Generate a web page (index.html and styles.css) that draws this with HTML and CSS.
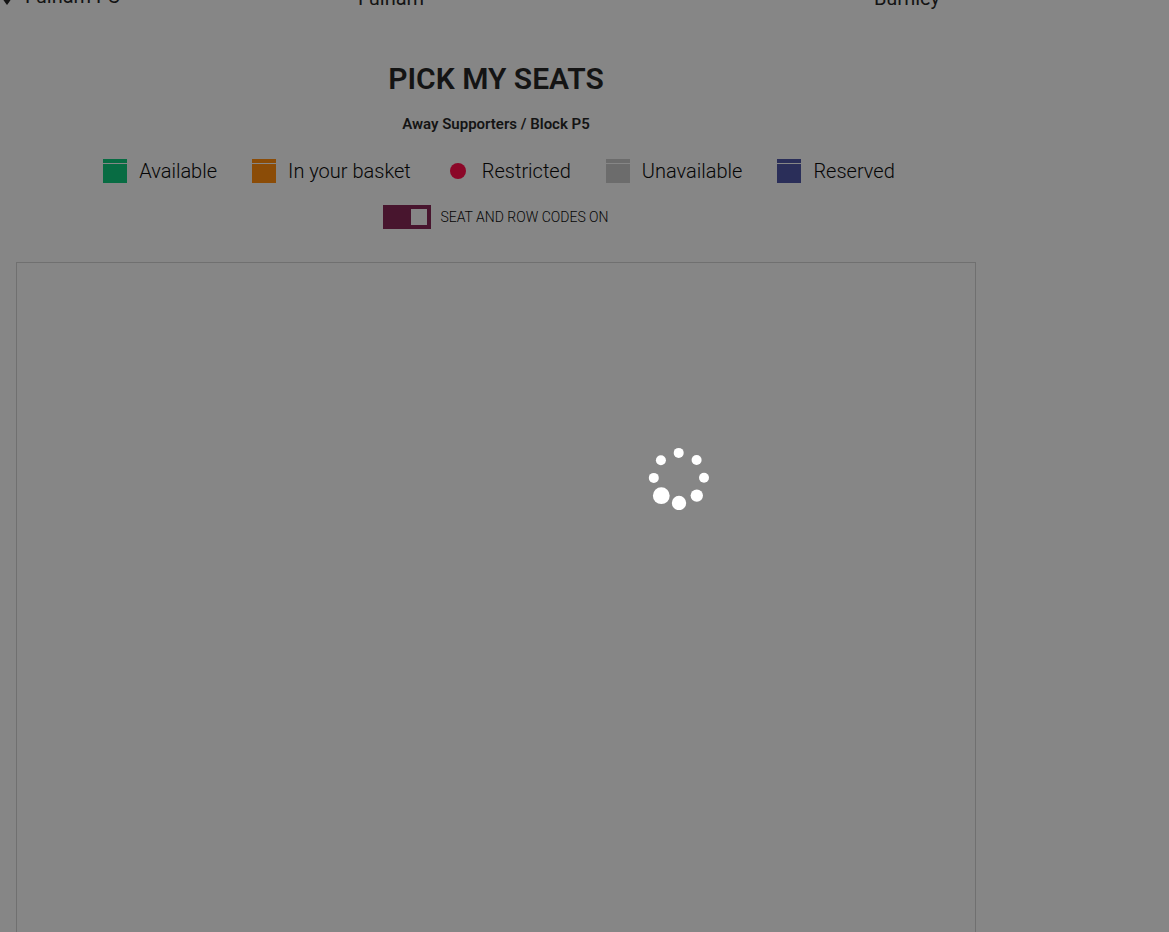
FILE: index.html
```
<!DOCTYPE html>
<html lang="en">
<head>
<meta charset="utf-8">
<title>Pick my seats</title>
<link rel="stylesheet" href="styles.css">
</head>
<body>
<div class="page">
  <main class="content">
    <div class="match">
      <span class="venue"><svg class="pin" viewBox="0 0 12 18" aria-hidden="true"><path d="M7 18C4 14 1 10 1 6a6 6 0 0 1 12 0c0 4-3 8-6 12z"/></svg>Fulham FC</span>
      <span class="home">Fulham</span>
      <span class="away">Burnley</span>
    </div>
    <h1 class="title">PICK MY SEATS</h1>
    <p class="block">Away Supporters / Block P5</p>
    <ul class="legend">
      <li class="key"><span class="seat available"></span>Available</li>
      <li class="key"><span class="seat basket"></span>In your basket</li>
      <li class="key"><span class="dot"></span>Restricted</li>
      <li class="key"><span class="seat unavailable"></span>Unavailable</li>
      <li class="key"><span class="seat reserved"></span>Reserved</li>
    </ul>
    <label class="codes"><input class="switch" type="checkbox" role="switch" checked>SEAT AND ROW CODES ON</label>
    <section class="map" aria-label="Seat map"></section>
  </main>
</div>
<div class="loading" role="status" aria-label="Loading">
  <svg class="spinner" viewBox="0 0 64 64" aria-hidden="true">
    <circle cx="31.7" cy="6.9" r="5"/>
    <circle cx="49.6" cy="14" r="5"/>
    <circle cx="57" cy="31.8" r="5"/>
    <circle cx="49.8" cy="49.6" r="6.2"/>
    <circle cx="32" cy="57" r="7.2"/>
    <circle cx="14.3" cy="49.7" r="8.4"/>
    <circle cx="6.8" cy="31.9" r="5"/>
    <circle cx="13.9" cy="14.2" r="5"/>
  </svg>
</div>
</body>
</html>
```
FILE: styles.css
```
* { box-sizing: border-box; }
body {
  margin: 0;
  background: #868686;
  color: #141414;
  font-family: Roboto, "Liberation Sans", sans-serif;
}
.page {
  display: grid;
  grid-template-columns: minmax(0, 1fr) 177px;
  height: 100vh;
  overflow: hidden;
}
.content {
  display: flex;
  flex-direction: column;
  align-items: center;
  min-width: 0;
  margin-top: -16px;
}
.match {
  display: grid;
  grid-template-columns: 358px 1fr auto;
  align-items: end;
  align-self: stretch;
  padding-right: 52px;
  font-size: 20px;
  line-height: 24px;
}
.venue { display: flex; align-items: center; gap: 13px; padding-bottom: 2px; }
.pin { width: 12px; height: 18px; fill: #141414; }
.title { margin: 51px 0 0; font-size: 30px; line-height: 36px; font-weight: 600; }
.block { margin: 17px 0 0; font-size: 15px; line-height: 20px; font-weight: 600; }
.legend {
  display: flex;
  justify-content: center;
  gap: 35px;
  margin: 25px 0 0;
  padding: 0 0 0 6px;
  list-style: none;
  font-size: 20px;
  font-weight: 300;
  line-height: 24px;
}
.key { display: flex; align-items: center; gap: 12px; white-space: nowrap; }
.seat {
  width: 24px;
  height: 24px;
  background-image: linear-gradient(transparent 4px, #868686 4px, #868686 5px, transparent 5px);
}
.available { background-color: #086c43; }
.basket { background-color: #8b4c07; }
.unavailable { background-color: #6c6c6c; }
.reserved { background-color: #2a2e59; }
.dot { width: 16px; height: 16px; margin: 4px; border-radius: 50%; background: #8b0728; }
.codes {
  display: flex;
  align-items: center;
  gap: 9px;
  margin-top: 22px;
  font-size: 14px;
  font-weight: 300;
  line-height: 24px;
}
.legend, .codes { color: #050505; }
.switch {
  appearance: none;
  display: flex;
  justify-content: flex-end;
  width: 48px;
  height: 24px;
  margin: 0;
  padding: 4px;
  background: #48152e;
}
.switch::before { content: ""; width: 16px; height: 16px; background: #868686; }
.map {
  flex: 1;
  align-self: stretch;
  margin: 33px 16px 0;
  border: 1px solid #707070;
  border-bottom: 0;
}
.loading {
  position: fixed;
  left: 647px;
  top: 446px;
}
.spinner { display: block; width: 64px; height: 64px; fill: #fff; }
```
